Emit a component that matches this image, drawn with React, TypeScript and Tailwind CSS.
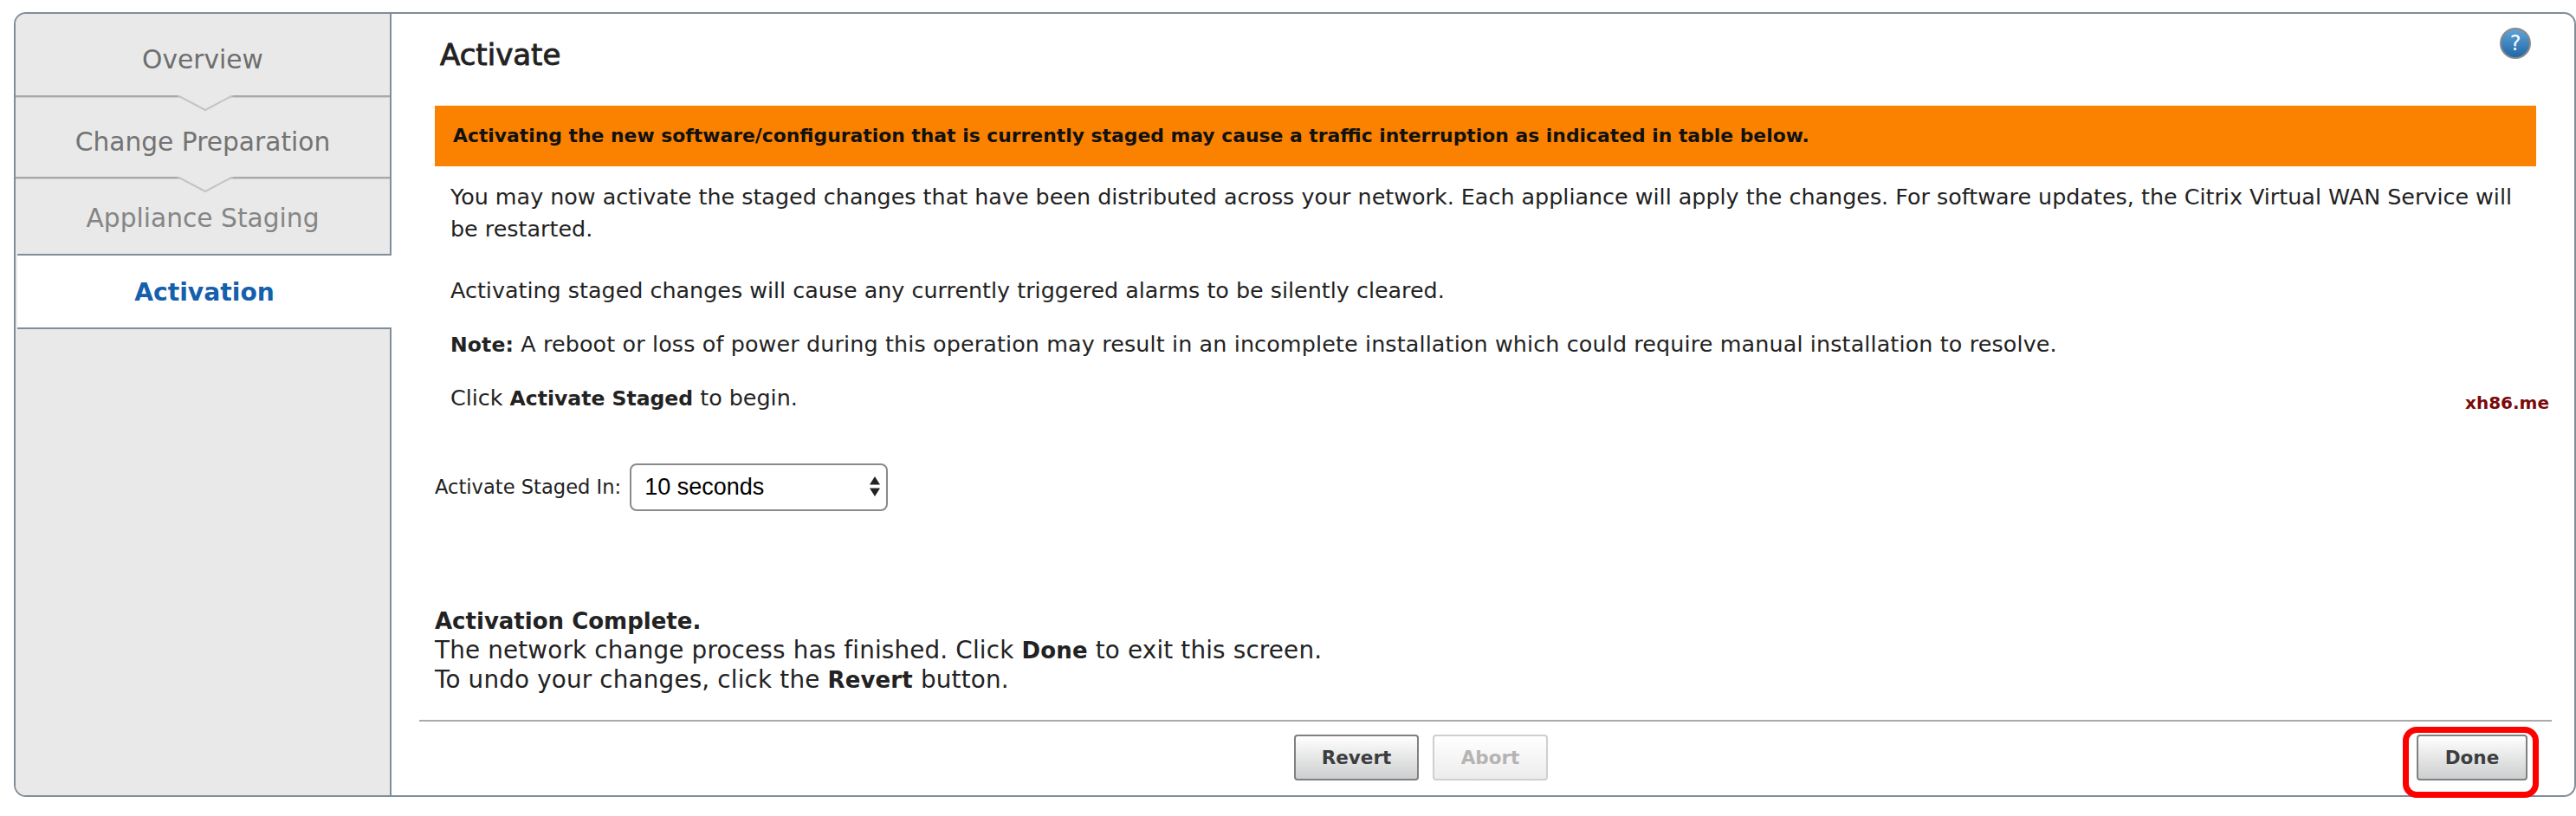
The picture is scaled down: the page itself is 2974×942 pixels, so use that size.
const font = "font-['DejaVu_Sans',sans-serif]"

const Chevron = () => (
    <svg className="absolute left-[186px] top-[-2px]" width="66" height="19" viewBox="0 0 66 19">
        <path d="M1 0 L33 17 L65 0" fill="#e9e9e9" stroke="#c4c4c4" strokeWidth="2" />
    </svg>
)

const Step = ({ label, className, textClass, chevron }: { label: string; className: string; textClass: string; chevron?: boolean }) => (
    <div className={`relative flex items-center justify-center ${className}`}>
        <span className={`text-[29.7px] ${textClass}`}>{label}</span>
        {chevron && <Chevron />}
    </div>
)

const Button = ({ label, className, disabled }: { label: string; className: string; disabled?: boolean }) => (
    <button
        disabled={disabled}
        className={`h-[53px] rounded-[4px] border-2 pt-[2px] text-[21.5px] font-bold bg-gradient-to-b ${className} ${disabled ? "border-[#cfcfcf] from-[#ffffff] to-[#ececec] text-[#b4b4b4]" : "border-[#808080] from-[#ffffff] to-[#cdcecf] text-[#3c3d3f]"}`}
    >
        {label}
    </button>
)

export default function App() {
    return (
        <div className={`h-[942px] w-[2974px] overflow-hidden bg-white pl-4 pt-[14px] text-[#222] ${font}`}>
            <div className="relative flex h-[906px] rounded-[14px] border-2 border-[#808e9b]">
                <div className="flex w-[434px] shrink-0 flex-col rounded-l-[12px] border-r-2 border-[#808e9b] bg-[#e9e9e9]">
                    <Step label="Overview" className="h-[94px] pt-[13px]" textClass="text-[#6e6e6e]" />
                    <Step label="Change Preparation" className="h-[94px] border-t-2 border-[#a9a9a9] pt-[12px] shadow-[inset_0_1px_0_#cfcfcf]" textClass="text-[#737373]" chevron />
                    <Step label="Appliance Staging" className="h-[89px] border-t-2 border-[#a9a9a9] pt-[6px] shadow-[inset_0_1px_0_#cfcfcf]" textClass="text-[#858585]" chevron />
                    <div className="-mr-[2px] ml-[2px] flex h-[87px] items-center justify-center border-y-2 border-[#808e9b] bg-white pt-[4px]">
                        <span className="text-[28.2px] font-bold text-[#1460ad]">Activation</span>
                    </div>
                </div>

                <div className="relative flex min-w-0 flex-1 flex-col">
                    <div className="flex-1 pl-[50px] pr-[44px]">
                        <h1 className="pl-[6px] pt-[24px] text-[34px] leading-[46px] font-normal [-webkit-text-stroke:0.9px_#222]">Activate</h1>
                        <div className="mt-[36px] flex h-[70px] items-center bg-[#fb8200] pl-[21px] text-[21.87px] font-bold text-[#111]">
                            Activating the new software/configuration that is currently staged may cause a traffic interruption as indicated in table below.
                        </div>
                        <div className="pl-[18px] pr-[10px] pt-[17px] text-[25.4px] leading-[37px]">
                            <p>You may now activate the staged changes that have been distributed across your network. Each appliance will apply the changes. For software updates, the Citrix Virtual WAN Service will be restarted.</p>
                            <p className="mt-[34px]">Activating staged changes will cause any currently triggered alarms to be silently cleared.</p>
                            <p className="mt-[25px] tracking-[0.13px]"><b className="text-[23.5px]">Note:</b> A reboot or loss of power during this operation may result in an incomplete installation which could require manual installation to resolve.</p>
                            <p className="mt-[24px]">Click <b className="text-[23.5px]">Activate Staged</b> to begin.</p>
                        </div>
                        <div className="mt-[56px] flex items-center gap-[10px]">
                            <label className="text-[22.6px]">Activate Staged In:</label>
                            <div className="relative">
                                <select className="h-[55px] w-[298px] appearance-none rounded-[8px] border-2 border-[#8a8a8a] bg-white pl-[15px] font-['Liberation_Sans',sans-serif] text-[27px] text-black">
                                    <option>10 seconds</option>
                                </select>
                                <svg className="absolute right-[9px] top-[15px]" width="12" height="23" viewBox="0 0 12 23">
                                    <path d="M6 0 L12 9.5 H0 Z M0 13.5 H12 L6 23 Z" fill="#222" />
                                </svg>
                            </div>
                        </div>
                        <div className="mt-[110px] text-[27.8px] leading-[34px] tracking-[0.17px]">
                            <p className="text-[26px] font-bold tracking-normal">Activation Complete.</p>
                            <p>The network change process has finished. Click <b className="text-[26px]">Done</b> to exit this screen.</p>
                            <p>To undo your changes, click the <b className="text-[26px]">Revert</b> button.</p>
                        </div>
                    </div>

                    <div className="ml-[32px] mr-[26px] flex h-[87px] items-start border-t-2 border-[#aaaaaa] pl-[1010px] pr-[28px] pt-[15px]">
                        <div className="flex gap-[16px]">
                            <Button label="Revert" className="w-[144px]" />
                            <Button label="Abort" className="w-[133px]" disabled />
                        </div>
                        <Button label="Done" className="ml-auto w-[128px]" />
                    </div>

                    {/* help, watermark and the red mark sit over the page */}
                    <div className="absolute left-[2434px] top-[16px] flex h-[36px] w-[36px] items-center justify-center rounded-full border-2 border-[#8a8a8a] bg-gradient-to-b from-[#5fa3d6] to-[#2067a8] text-[24px] text-white">?</div>
                    <span className="absolute left-[2394px] top-[436px] text-[20px] font-bold leading-[26px] text-[#7a0a0a]">xh86.me</span>
                    <div className="absolute left-[2322px] top-[823px] h-[82px] w-[157px] rounded-[16px] border-[7px] border-[#fe0000]" />
                </div>
            </div>
        </div>
    )
}
